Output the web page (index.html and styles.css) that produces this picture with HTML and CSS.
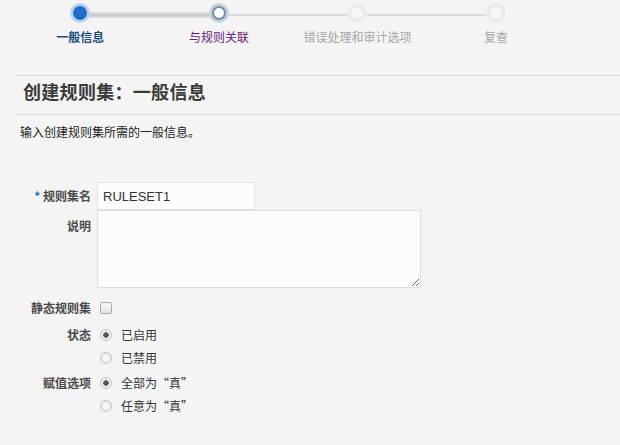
FILE: index.html
```html
<!DOCTYPE html>
<html lang="zh-CN">
<head>
  <meta charset="UTF-8">
  <title>创建规则集</title>
  <link rel="stylesheet" href="styles.css">
</head>
<body>
  <div class="train">
    <div class="step done current">
      <span class="dot"></span>
      <span class="step-label">一般信息</span>
    </div>
    <div class="step next">
      <span class="dot"></span>
      <span class="step-label">与规则关联</span>
    </div>
    <div class="step todo">
      <span class="dot"></span>
      <span class="step-label">错误处理和审计选项</span>
    </div>
    <div class="step todo last">
      <span class="dot"></span>
      <span class="step-label">复查</span>
    </div>
  </div>

  <div class="page-header">
    <h1>创建规则集：一般信息</h1>
  </div>
  <p class="intro">输入创建规则集所需的一般信息。</p>

  <div class="form">
    <label class="label required"><span class="star">*</span> 规则集名</label>
    <div class="field"><input class="text" type="text" value="RULESET1"></div>

    <label class="label top">说明</label>
    <div class="field"><textarea class="area"></textarea></div>

    <label class="label row-check">静态规则集</label>
    <div class="field row-check"><span class="checkbox"></span></div>

    <label class="label row-radio">状态</label>
    <div class="field choices">
      <div class="choice"><span class="radio on"></span>已启用</div>
      <div class="choice"><span class="radio"></span>已禁用</div>
    </div>

    <label class="label row-radio">赋值选项</label>
    <div class="field choices">
      <div class="choice"><span class="radio on"></span>全部为“真”</div>
      <div class="choice"><span class="radio"></span>任意为“真”</div>
    </div>
  </div>
</body>
</html>
```

FILE: styles.css
```css
body {
  margin: 0;
  background: #f4f4f4;
  color: #333;
  font-family: "Noto Sans CJK SC", "Liberation Sans", sans-serif;
  font-size: 12px;
}

/* step train */
.train {
  display: flex;
  padding-left: 11px;
  height: 60px;
}

.step {
  position: relative;
  width: 138.6px;
  display: flex;
  flex-direction: column;
  align-items: center;
}

.step::after {
  content: "";
  position: absolute;
  left: 50%;
  width: 100%;
  top: 14px;
  height: 2px;
  background: #dcdcdc;
}

.step.done::after {
  top: 12px;
  height: 6px;
  background: linear-gradient(#e6e6e6, #c9c9c9 50%, #e2e2e2);
}

.step.last::after {
  display: none;
}

.dot {
  position: relative;
  z-index: 1;
  margin-top: 6px;
  width: 14px;
  height: 14px;
  border-radius: 50%;
  box-sizing: border-box;
}

.current .dot {
  background: #1a6fc9;
  box-shadow: 0 0 0 3px #b9d3ec;
}

.next .dot {
  background: #fff;
  border: 2px solid #6e8db0;
  box-shadow: 0 0 0 3px #c9d2db;
}

.todo .dot {
  background: #f6f6f6;
  border: 1px solid #e4e4e4;
  box-shadow: 0 0 0 3px #ededed;
}

.step-label {
  margin-top: 8px;
  font-size: 12px;
  line-height: 18px;
  white-space: nowrap;
  color: #a6a6a6;
}

.current .step-label {
  color: #1d4d7e;
  font-weight: bold;
}

.next .step-label {
  color: #6a1a78;
}

/* header */
.page-header {
  margin: 15px 0 0 16px;
  border-top: 1px solid #dadada;
  border-bottom: 1px solid #dadada;
  height: 38px;
}

h1 {
  margin: 0;
  padding: 2px 0 0 7px;
  font-size: 18px;
  line-height: 26px;
  font-weight: bold;
  letter-spacing: 0.3px;
  color: #3a3a3a;
}

.intro {
  margin: 8px 0 0 20px;
  font-size: 12px;
  line-height: 18px;
  color: #222;
}

/* form */
.form {
  display: grid;
  grid-template-columns: 91px 1fr;
  column-gap: 6px;
  margin-top: 41px;
}

.label {
  text-align: right;
  font-size: 12px;
  font-weight: bold;
  color: #4a4a4a;
  line-height: 28px;
}

.label.top {
  line-height: 32px;
}

.star {
  color: #2d6bb3;
}

.text {
  box-sizing: border-box;
  width: 158px;
  height: 28px;
  margin: 0;
  padding: 0 5px;
  border: 1px solid #e2e2e2;
  background: #fbfcfe;
  font-family: "Liberation Sans", sans-serif;
  font-size: 13px;
  color: #333;
}

.area {
  display: block;
  box-sizing: border-box;
  width: 324px;
  height: 78px;
  margin: 0;
  border: 1px solid #dedede;
  background: #fbfcfe;
}

.row-check {
  margin-top: 9px;
  line-height: 22px;
}

.field.row-check {
  display: flex;
  align-items: center;
}

.checkbox {
  display: block;
  margin-left: 3px;
  width: 10px;
  height: 10px;
  border: 1px solid #a9a9a9;
  border-radius: 2px;
  background: linear-gradient(#fafafa, #e4e4e4);
}

.row-radio {
  margin-top: 4px;
  line-height: 23px;
}

.choices {
  margin-top: 4px;
}

.choices + .row-radio,
.choices + .row-radio + .choices {
  margin-top: 2px;
}

.choice {
  display: flex;
  align-items: center;
  height: 23px;
  font-size: 12px;
  color: #333;
}

.radio {
  box-sizing: border-box;
  width: 12px;
  height: 12px;
  margin: 0 9px 0 3px;
  border-radius: 50%;
  border: 1px solid #c5c5c5;
  background: radial-gradient(#fafafa, #e2e2e2);
}

.radio.on {
  background: radial-gradient(circle, #555 0 2.5px, #f2f2f2 3px, #dedede);
}
```
